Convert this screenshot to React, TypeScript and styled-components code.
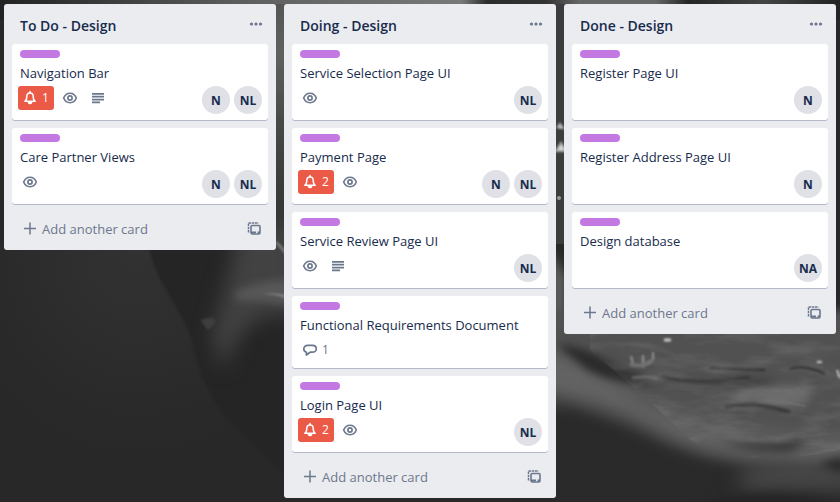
import React from "react";
import styled, { createGlobalStyle, css } from "styled-components";

const GlobalStyle = createGlobalStyle`
  *, *::before, *::after { box-sizing: border-box; }
  body {
    margin: 0;
    background: #282828;
    color: #172b4d;
    font-family: "Open Sans", "Noto Sans", sans-serif;
    font-size: 13px;
    line-height: 20px;
  }
  button { font: inherit; color: inherit; border: 0; padding: 0; background: none; cursor: pointer; }
  h2, h3, ul { margin: 0; padding: 0; font: inherit; list-style: none; }
`;

const Page = styled.main`
  position: relative;
  min-height: 100vh;
  overflow: hidden;
`;

const Backdrop = styled.svg`
  position: absolute;
  inset: 0;
  width: 100%;
  height: 100%;
`;

const Board = styled.div`
  position: relative;
  display: grid;
  grid-template-columns: repeat(3, minmax(0, 1fr));
  align-items: start;
  gap: 8px;
  padding: 4px;
`;

const List = styled.section`
  padding: 0 8px;
  border-radius: 3px;
  background: #ebecf0;
`;

const ListHeader = styled.header`
  display: flex;
  align-items: center;
  justify-content: space-between;
  height: 40px;
  padding: 4px 4px 0 8px;
`;

const ListTitle = styled.h2`
  font-size: 14px;
  font-weight: 600;
`;

const IconButton = styled.button`
  display: flex;
  color: #6b778c;
`;

const Cards = styled.ul`
  display: flex;
  flex-direction: column;
  gap: 8px;
`;

const CardBox = styled.li<{ $compact?: boolean }>`
  min-height: ${(p) => (p.$compact ? 72 : 76)}px;
  padding: 6px 6px 0 8px;
  border-radius: 3px;
  background: #fff;
  box-shadow: 0 1px 0 #b3b9c8;
`;

const Label = styled.span`
  display: block;
  width: 40px;
  height: 8px;
  border-radius: 4px;
  background: #c377e0;
`;

const CardTitle = styled.h3`
  margin-top: 5px;
`;

const CardFooter = styled.div`
  display: flex;
  justify-content: space-between;
  margin-top: 3px;
`;

const Badges = styled.div`
  display: flex;
  align-items: flex-start;
  gap: 4px;
  margin-left: -2px;
`;

const Badge = styled.span<{ $alert?: boolean }>`
  display: flex;
  align-items: center;
  gap: 4px;
  min-width: 24px;
  height: 24px;
  padding: 0 4px;
  border-radius: 3px;
  color: #6b778c;
  font-size: 12px;
  ${(p) =>
    p.$alert &&
    css`
      min-width: 36px;
      background: #eb5a46;
      color: #fff;
    `}
`;

const Members = styled.div`
  display: flex;
  gap: 4px;
`;

const Avatar = styled.button`
  width: 28px;
  height: 28px;
  padding-top: 2px;
  border-radius: 50%;
  background: #dfe1e6;
  font-size: 12px;
  font-weight: 700;
  text-align: center;
`;

const ListFooter = styled.footer`
  display: flex;
  align-items: center;
  justify-content: space-between;
  height: 46px;
  padding: 3px 6px 0 10px;
  color: #6b778c;
`;

const AddButton = styled.button`
  display: flex;
  align-items: center;
  gap: 4px;
`;

const BellIcon = () => (
  <svg width="16" height="16" viewBox="0 0 16 16" fill="none" stroke="currentColor" strokeWidth="1.5" aria-hidden="true">
    <path d="M2.800 11.300c1.700-1 2-2 2-4.800C4.800 4.400 5.900 3 8 3s3.200 1.400 3.200 3.500c0 2.800.3 3.800 2 4.800z" strokeLinejoin="round" />
    <path d="M8 1.500V3" strokeLinecap="round" />
    <path d="M6.500 12.500c.3 1.300 2.700 1.300 3 0z" fill="currentColor" />
  </svg>
);

const EyeIcon = () => (
  <svg width="16" height="16" viewBox="0 0 16 16" fill="none" stroke="currentColor" aria-hidden="true">
    <path d="M1.600 8C3 4.900 5.200 3.300 8 3.300S13 4.900 14.400 8C13 11.100 10.800 12.700 8 12.700S3 11.100 1.600 8z" strokeWidth="1.600" />
    <circle cx="8" cy="8" r="2.100" strokeWidth="1.700" />
  </svg>
);

const TextIcon = () => (
  <svg width="16" height="16" viewBox="0 0 16 16" fill="currentColor" aria-hidden="true">
    <path d="M2 3h12v1.700H2zM2 5.800h12v1.700H2zM2 8.700h12v1.700H2zM2 11.500h8v1.700H2z" />
  </svg>
);

const CommentIcon = () => (
  <svg width="16" height="16" viewBox="0 0 16 16" fill="none" stroke="currentColor" strokeWidth="1.700" strokeLinejoin="round" aria-hidden="true">
    <path d="M4.400 13V10.200C2.500 9.700 1.800 8.500 1.800 7c0-2.200 1.500-3.700 4-3.700h4.500c2.500 0 4 1.400 4 3.400s-1.500 3.500-4 3.500H8.200z" />
  </svg>
);

const DotsIcon = () => (
  <svg width="16" height="16" viewBox="0 0 16 16" fill="currentColor" aria-hidden="true">
    <circle cx="3.500" cy="6" r="1.600" />
    <circle cx="8" cy="6" r="1.600" />
    <circle cx="12.500" cy="6" r="1.600" />
  </svg>
);

const PlusIcon = () => (
  <svg width="16" height="16" viewBox="0 0 16 16" stroke="currentColor" strokeWidth="1.500" aria-hidden="true">
    <path d="M8 1.500v12M2 7.500h12" />
  </svg>
);

const TemplateIcon = () => (
  <svg width="16" height="16" viewBox="0 0 16 16" fill="none" stroke="currentColor" aria-hidden="true">
    <path d="M2.500 11.500V2H12.500" strokeWidth="1.500" strokeDasharray="2.500 .7" />
    <rect x="5" y="4.500" width="9" height="8.500" rx="1.200" strokeWidth="1.600" />
    <path d="M5 11.500h5M11.500 11.500H14" strokeWidth="1.800" />
  </svg>
);

type CardData = {
  title: string;
  alerts?: number;
  watching?: boolean;
  description?: boolean;
  comments?: number;
  members?: string[];
};

const lists: { title: string; cards: CardData[] }[] = [
  {
    title: "To Do - Design",
    cards: [
      { title: "Navigation Bar", alerts: 1, watching: true, description: true, members: ["N", "NL"] },
      { title: "Care Partner Views", watching: true, members: ["N", "NL"] },
    ],
  },
  {
    title: "Doing - Design",
    cards: [
      { title: "Service Selection Page UI", watching: true, members: ["NL"] },
      { title: "Payment Page", alerts: 2, watching: true, members: ["N", "NL"] },
      { title: "Service Review Page UI", watching: true, description: true, members: ["NL"] },
      { title: "Functional Requirements Document", comments: 1 },
      { title: "Login Page UI", alerts: 2, watching: true, members: ["NL"] },
    ],
  },
  {
    title: "Done - Design",
    cards: [
      { title: "Register Page UI", members: ["N"] },
      { title: "Register Address Page UI", members: ["N"] },
      { title: "Design database", members: ["NA"] },
    ],
  },
];

const Card = ({ card }: { card: CardData }) => (
  <CardBox $compact={!card.members}>
    <Label />
    <CardTitle>{card.title}</CardTitle>
    <CardFooter>
      <Badges>
        {card.alerts && <Badge $alert><BellIcon />{card.alerts}</Badge>}
        {card.watching && <Badge><EyeIcon /></Badge>}
        {card.description && <Badge><TextIcon /></Badge>}
        {card.comments && <Badge><CommentIcon />{card.comments}</Badge>}
      </Badges>
      <Members>
        {card.members?.map((m) => <Avatar key={m} type="button">{m}</Avatar>)}
      </Members>
    </CardFooter>
  </CardBox>
);

const Photo = () => (
  <Backdrop viewBox="0 0 840 502" preserveAspectRatio="xMidYMid slice" aria-hidden="true">
    <defs>
      <filter id="soft" filterUnits="userSpaceOnUse" x="-60" y="-60" width="960" height="620" colorInterpolationFilters="sRGB"><feGaussianBlur stdDeviation="10" /></filter>
      <filter id="mid" filterUnits="userSpaceOnUse" x="-60" y="-60" width="960" height="620" colorInterpolationFilters="sRGB"><feGaussianBlur stdDeviation="4" /></filter>
      <filter id="fine" filterUnits="userSpaceOnUse" x="-60" y="-60" width="960" height="620" colorInterpolationFilters="sRGB"><feGaussianBlur stdDeviation="1" /></filter>
      <filter id="grain" x="0" y="0" width="100%" height="100%" colorInterpolationFilters="sRGB">
        <feTurbulence type="fractalNoise" baseFrequency="0.02 0.07" numOctaves="4" seed="7" />
        <feColorMatrix values="0 0 0 0 1  0 0 0 0 1  0 0 0 0 1  1.200 0 0 0 -0.500" />
      </filter>
      <linearGradient id="sky">
        <stop offset="0" stopColor="#222" />
        <stop offset=".12" stopColor="#3a3a3a" />
        <stop offset=".3" stopColor="#606060" />
        <stop offset=".55" stopColor="#787878" />
        <stop offset=".58" stopColor="#2c2c2c" />
        <stop offset=".65" stopColor="#333" />
        <stop offset=".69" stopColor="#666" />
        <stop offset=".78" stopColor="#666" />
        <stop offset=".82" stopColor="#252525" />
        <stop offset=".91" stopColor="#444" />
        <stop offset="1" stopColor="#222" />
      </linearGradient>
      <linearGradient id="gapLeft" x2="0" y2="1">
        <stop offset="0" stopColor="#555" />
        <stop offset=".2" stopColor="#606060" />
        <stop offset=".5" stopColor="#484848" />
        <stop offset="1" stopColor="#303030" />
      </linearGradient>
      <radialGradient id="wall" cx=".6" cy="0" r=".8">
        <stop offset="0" stopColor="#323232" />
        <stop offset="1" stopColor="#282828" />
      </radialGradient>
    </defs>
    <rect width="840" height="502" fill="#282828" />
    <rect y="245" width="230" height="257" fill="url(#wall)" />
    <rect width="840" height="20" fill="url(#sky)" />
    <rect x="276" y="4" width="10" height="240" fill="url(#gapLeft)" />
    <path d="M148 240C155 290 188 310 196 355C204 385 214 400 222 412L300 490V240z" fill="#252525" filter="url(#fine)" />
    <path d="M240 225H300V318Q262 305 240 335L222 370L212 335Q222 300 230 270z" fill="#424242" filter="url(#soft)" />
    <path d="M235 292Q265 278 300 280V308Q270 300 235 300z" fill="#585858" filter="url(#mid)" />
    <path d="M262 294Q276 293 290 300V296Q276 292 262 294z" fill="#808080" filter="url(#fine)" />
    <path d="M276 242L288 255" stroke="#777" strokeWidth="3" filter="url(#fine)" />
    <path d="M200 320L213 317L216 323L208 330z" fill="#3e3e3e" filter="url(#fine)" />
    <rect x="556" y="4" width="10" height="240" fill="#3c3c3c" />
    <path d="M557 128L560 124L564 129M556 151L561 143L566 151z" stroke="#aaa" strokeWidth="2" fill="#ddd" filter="url(#fine)" />
    <circle cx="559" cy="198" r="2" fill="#999" />
    <path d="M552 250L566 278V420H552z" fill="#606060" filter="url(#mid)" />
    <path d="M556 310H880V456Q740 475 680 448Q610 420 546 400z" fill="#515151" filter="url(#mid)" />
    <path d="M535 346Q600 364 640 400Q720 440 880 440V470Q760 478 690 460Q610 430 535 400z" fill="#646464" filter="url(#soft)" />
    <path d="M535 396Q600 406 650 432Q710 470 880 478V540H535z" fill="#2a2a2a" filter="url(#soft)" />
    <path d="M740 470Q790 452 880 472V490H740z" fill="#484848" filter="url(#soft)" />
    <path d="M700 506Q760 482 860 506z" fill="#242424" filter="url(#mid)" />
    <g filter="url(#mid)">
      <path d="M556 344Q590 346 620 369Q650 378 655 384Q610 384 585 368z" fill="#2a2a2a" />
      <path d="M740 390Q780 382 812 388L808 402Q770 408 730 398z" fill="#6c6c6c" />
      <path d="M720 442Q770 446 812 438L790 452Q750 454 720 442z" fill="#383838" />
      <path d="M690 382Q740 376 780 381L760 387z" fill="#3a3a3a" />
      <path d="M818 464L845 456V474z" fill="#292929" />
    </g>
    <g filter="url(#fine)" fill="none">
      <path d="M662 376Q690 386 750 377" stroke="#333" strokeWidth="3" opacity=".7" />
      <path d="M725 407Q755 401 790 412" stroke="#3a3a3a" strokeWidth="4" />
      <path d="M762 400Q790 402 806 406" stroke="#7c7c7c" strokeWidth="1" />
      <path d="M710 368L765 370M790 369Q805 364 825 374" stroke="#2c2c2c" strokeWidth="2" />
      <path d="M632 378Q650 375 658 379" stroke="#6c6c6c" strokeWidth="3" opacity=".7" />
      <path d="M631 356L633 364M643 355V368M653 352V360" stroke="#909090" strokeWidth="2" />
      <path d="M630 364Q642 368 652 361" stroke="#707070" strokeWidth="4" />
      <path d="M664 340H671" stroke="#ccc" strokeWidth="3" />
      <path d="M817 362H822M837 370L840 378" stroke="#ccc" strokeWidth="2" />
    </g>
    <path d="M556 334H840V450Q740 475 690 448Q610 400 556 360z" filter="url(#grain)" opacity="0" />
    <clipPath id="rock"><path d="M590 334H840V450Q740 470 690 440Q650 400 590 350z" /></clipPath>
    <g clipPath="url(#rock)">
      <rect x="556" y="330" width="284" height="140" filter="url(#grain)" opacity=".22" />
    </g>
  </Backdrop>
);

export default function App() {
  return (
    <Page>
      <GlobalStyle />
      <Photo />
      <Board>
        {lists.map((list) => (
          <List key={list.title} aria-label={list.title}>
            <ListHeader>
              <ListTitle>{list.title}</ListTitle>
              <IconButton type="button" aria-label="List actions"><DotsIcon /></IconButton>
            </ListHeader>
            <Cards>
              {list.cards.map((card) => <Card key={card.title} card={card} />)}
            </Cards>
            <ListFooter>
              <AddButton type="button"><PlusIcon />Add another card</AddButton>
              <IconButton type="button" aria-label="Create from template"><TemplateIcon /></IconButton>
            </ListFooter>
          </List>
        ))}
      </Board>
    </Page>
  );
}
